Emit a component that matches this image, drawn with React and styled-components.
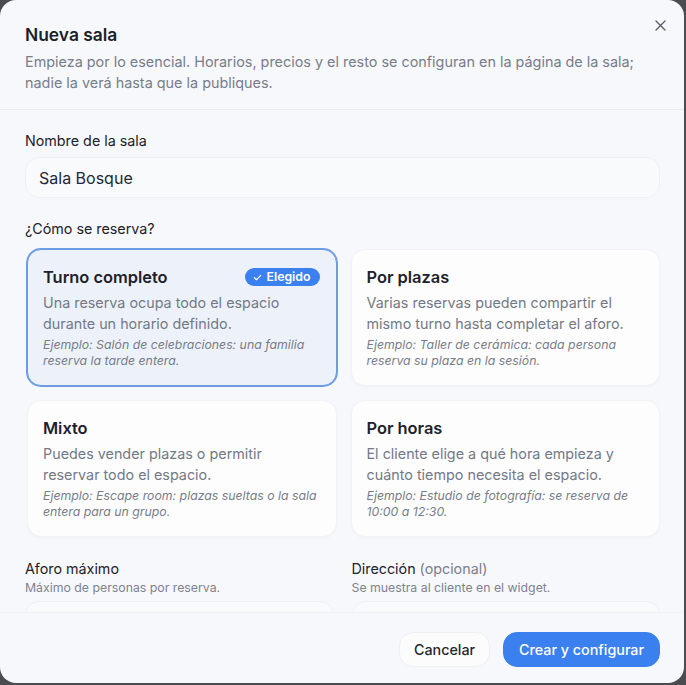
import styled, { createGlobalStyle } from 'styled-components';

const GlobalStyle = createGlobalStyle`
	* {
		box-sizing: border-box;
	}
	html,
	body {
		margin: 0;
		height: 100%;
		background: #4b4c50;
		font-family: Inter, 'Noto Sans', 'Liberation Sans', sans-serif;
		color: #1f2430;
	}
`;

const Dialog = styled.div`
	display: flex;
	flex-direction: column;
	width: 684px;
	height: 683px;
	background: #f7f8fb;
	border-radius: 16px;
	overflow: hidden;
	position: relative;
`;

const Header = styled.header`
	flex-shrink: 0;
	padding: 24px 36px 16px 25px;
	border-bottom: 1px solid #e9ecf1;
	h2 {
		margin: 0;
		font-size: 17.4px;
		line-height: 22px;
		font-weight: 600;
		color: #1b1f2a;
	}
	p {
		margin: 5px 0 0;
		font-size: 14.4px;
		line-height: 21px;
		color: #777d89;
	}
`;

const Close = styled.button`
	position: absolute;
	top: 17px;
	right: 16px;
	width: 16px;
	height: 16px;
	padding: 0;
	border: none;
	background: transparent;
	display: flex;
	align-items: center;
	justify-content: center;
	color: #5b606b;
`;

const Body = styled.div`
	flex: 1;
	min-height: 0;
	overflow: hidden;
	padding: 21px 24px 0 25px;
	display: flex;
	flex-direction: column;
	& > * {
		flex-shrink: 0;
	}
`;

const Label = styled.div`
	font-size: 14.3px;
	line-height: 20px;
	font-weight: 400;
	color: #1c212c;
	.optional {
		color: #7a808c;
	}
`;

const Hint = styled.div`
	font-size: 12.3px;
	line-height: 16px;
	color: #7d838f;
	margin-top: 1px;
`;

const Input = styled.div`
	flex-shrink: 0;
	height: 41px;
	margin-top: ${props => props.gap || 6}px;
	padding: 0 13px;
	display: flex;
	align-items: center;
	border: 1px solid #eef0f4;
	border-radius: 14px;
	background: #f9fafc;
	font-size: 16px;
	color: #232835;
`;

const Section = styled.div`
	margin-top: ${props => props.top}px;
`;

const Grid = styled.div`
	display: grid;
	grid-template-columns: 1fr 1fr;
	gap: 14px 14px;
	margin: 10px 0 0 2px;
`;

const Card = styled.div`
	position: relative;
	height: 137px;
	padding: 16px 14px 15px 15px;
	border-radius: 14px;
	border: 1px solid ${props => (props.selected ? '#6d9ce3' : '#f1f3f6')};
	background: ${props => (props.selected ? '#edf2fa' : '#fdfdfe')};
	box-shadow: ${props =>
		props.selected
			? '0 0 0 1px #6d9ce3'
			: '0 1px 3px rgba(30, 40, 60, 0.03)'};
	.card__title {
		display: flex;
		justify-content: space-between;
		align-items: center;
		font-size: 16.4px;
		line-height: 22px;
		font-weight: 600;
		color: #1d212b;
	}
	.card__desc {
		margin-top: 4px;
		font-size: 14.35px;
		line-height: 21px;
		color: #737986;
	}
	.card__example {
		margin-top: 3px;
		font-size: 12.3px;
		line-height: 16px;
		font-style: italic;
		color: #777d89;
	}
`;

const Badge = styled.span`
	display: inline-flex;
	align-items: center;
	gap: 4px;
	height: 18px;
	margin-right: 2px;
	padding: 0 9px 0 8px;
	border-radius: 9px;
	background: #3b80ef;
	color: #fff;
	font-size: 12.3px;
	font-weight: 600;
`;

const Fields = styled.div`
	display: grid;
	grid-template-columns: 1fr 1fr;
	gap: 18px;
	margin-top: 22px;
`;

const Footer = styled.footer`
	flex-shrink: 0;
	display: flex;
	justify-content: flex-end;
	gap: 13px;
	padding: 19px 24px 16px;
	border-top: 1px solid #f0f2f5;
`;

const Button = styled.button`
	height: 35px;
	padding: 0 ${props => (props.primary ? 15 : 14)}px;
	border-radius: 14px;
	font-family: inherit;
	font-size: 14.3px;
	font-weight: 500;
	border: 1px solid ${props => (props.primary ? '#3b80ef' : '#eef0f3')};
	background: ${props => (props.primary ? '#3b80ef' : '#fcfcfd')};
	color: ${props => (props.primary ? '#fff' : '#232835')};
`;

const modes = [
	{
		title: 'Turno completo',
		desc: 'Una reserva ocupa todo el espacio durante un horario definido.',
		example: 'Ejemplo: Salón de celebraciones: una familia reserva la tarde entera.',
		selected: true,
	},
	{
		title: 'Por plazas',
		desc: 'Varias reservas pueden compartir el mismo turno hasta completar el aforo.',
		example: 'Ejemplo: Taller de cerámica: cada persona reserva su plaza en la sesión.',
	},
	{
		title: 'Mixto',
		desc: 'Puedes vender plazas o permitir reservar todo el espacio.',
		example: 'Ejemplo: Escape room: plazas sueltas o la sala entera para un grupo.',
	},
	{
		title: 'Por horas',
		desc: 'El cliente elige a qué hora empieza y cuánto tiempo necesita el espacio.',
		example: 'Ejemplo: Estudio de fotografía: se reserva de 10:00 a 12:30.',
	},
];

function App() {
	return (
		<>
			<GlobalStyle />
			<Dialog>
				<Header>
					<h2>Nueva sala</h2>
					<p>
						Empieza por lo esencial. Horarios, precios y el resto se
						configuran en la página de la sala; nadie la verá hasta que la
						publiques.
					</p>
				</Header>
				<Close aria-label='Cerrar'>
					<svg width='11' height='11' viewBox='0 0 11 11'>
						<path
							d='M1 1l9 9M10 1l-9 9'
							stroke='currentColor'
							strokeWidth='1.4'
							strokeLinecap='round'
						/>
					</svg>
				</Close>
				<Body>
					<Label>Nombre de la sala</Label>
					<Input>Sala Bosque</Input>
					<Section top={21}>
						<Label>¿Cómo se reserva?</Label>
					</Section>
					<Grid>
						{modes.map(mode => (
							<Card key={mode.title} selected={mode.selected}>
								<div className='card__title'>
									<span>{mode.title}</span>
									{mode.selected && (
										<Badge>
											<svg width='9' height='9' viewBox='0 0 10 10'>
												<path
													d='M1.5 5.2l2.3 2.3L8.6 2.6'
													fill='none'
													stroke='#fff'
													strokeWidth='1.3'
													strokeLinecap='round'
													strokeLinejoin='round'
												/>
											</svg>
											Elegido
										</Badge>
									)}
								</div>
								<div className='card__desc'>{mode.desc}</div>
								<div className='card__example'>{mode.example}</div>
							</Card>
						))}
					</Grid>
					<Fields>
						<div>
							<Label>Aforo máximo</Label>
							<Hint>Máximo de personas por reserva.</Hint>
							<Input gap={5} />
						</div>
						<div>
							<Label>
								Dirección <span className='optional'>(opcional)</span>
							</Label>
							<Hint>Se muestra al cliente en el widget.</Hint>
							<Input gap={5} />
						</div>
					</Fields>
				</Body>
				<Footer>
					<Button>Cancelar</Button>
					<Button primary>Crear y configurar</Button>
				</Footer>
			</Dialog>
		</>
	);
}

export default App;
